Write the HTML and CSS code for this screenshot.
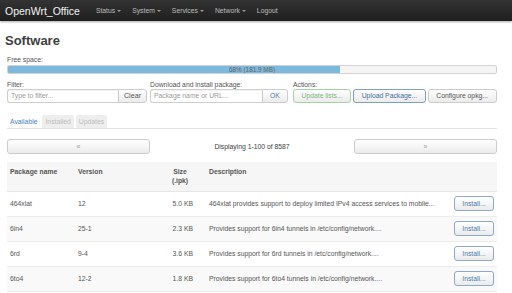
FILE: index.html
```html
<!DOCTYPE html>
<html>
<head>
<meta charset="utf-8">
<title>Software</title>
<link rel="stylesheet" href="styles.css">
</head>
<body>
<header class="topbar">
  <span class="brand">OpenWrt_Office</span>
  <nav class="menu">
    <span class="menu-item">Status<i class="caret"></i></span>
    <span class="menu-item">System<i class="caret"></i></span>
    <span class="menu-item">Services<i class="caret"></i></span>
    <span class="menu-item">Network<i class="caret"></i></span>
    <span class="menu-item">Logout</span>
  </nav>
</header>
<main class="main">
  <h2 class="title">Software</h2>
  <div class="label">Free space:</div>
  <div class="bar">
    <div class="bar-fill" style="width: 68%"></div>
    <div class="bar-text">68% (181.9 MB)</div>
  </div>
  <div class="controls">
    <div class="group group-filter">
      <div class="label">Filter:</div>
      <div class="input-row">
        <span class="input input-filter">Type to filter...</span>
        <span class="btn btn-attached btn-clear">Clear</span>
      </div>
    </div>
    <div class="group group-download">
      <div class="label">Download and install package:</div>
      <div class="input-row">
        <span class="input input-pkg">Package name or URL...</span>
        <span class="btn btn-attached btn-ok">OK</span>
      </div>
    </div>
    <div class="group group-actions">
      <div class="label">Actions:</div>
      <div class="input-row actions">
        <span class="btn btn-green">Update lists...</span>
        <span class="btn btn-blue">Upload Package...</span>
        <span class="btn">Configure opkg...</span>
      </div>
    </div>
  </div>
  <div class="tabs">
    <span class="tab active">Available</span>
    <span class="tab">Installed</span>
    <span class="tab">Updates</span>
  </div>
  <div class="pager">
    <span class="btn pager-btn">&laquo;</span>
    <span class="pager-text">Displaying 1-100 of 8587</span>
    <span class="btn pager-btn">&raquo;</span>
  </div>
  <table class="pkgs">
    <colgroup>
      <col class="c-name"><col class="c-ver"><col class="c-size"><col class="c-desc"><col class="c-act">
    </colgroup>
    <thead>
      <tr>
        <th>Package name</th>
        <th>Version</th>
        <th class="num">Size<br>(.ipk)</th>
        <th>Description</th>
        <th></th>
      </tr>
    </thead>
    <tbody>
      <tr>
        <td>464xlat</td><td>12</td><td class="num">5.0 KB</td>
        <td>464xlat provides support to deploy limited IPv4 access services to mobile...</td>
        <td class="act"><span class="btn btn-install">Install...</span></td>
      </tr>
      <tr>
        <td>6in4</td><td>25-1</td><td class="num">2.3 KB</td>
        <td>Provides support for 6in4 tunnels in /etc/config/network....</td>
        <td class="act"><span class="btn btn-install">Install...</span></td>
      </tr>
      <tr>
        <td>6rd</td><td>9-4</td><td class="num">3.6 KB</td>
        <td>Provides support for 6rd tunnels in /etc/config/network....</td>
        <td class="act"><span class="btn btn-install">Install...</span></td>
      </tr>
      <tr>
        <td>6to4</td><td>12-2</td><td class="num">1.8 KB</td>
        <td>Provides support for 6to4 tunnels in /etc/config/network....</td>
        <td class="act"><span class="btn btn-install">Install...</span></td>
      </tr>
    </tbody>
  </table>
</main>
</body>
</html>
```
FILE: styles.css
```css
html, body {
  margin: 0;
  padding: 0;
  overflow: hidden;
  background: #fff;
}
body {
  font-family: "Liberation Sans", Arial, sans-serif;
  font-size: 6.8px;
  line-height: 9px;
  color: #404040;
}
.topbar {
  height: 21px;
  display: flex;
  align-items: center;
  background: linear-gradient(#333333, #1f1f1f);
  box-shadow: 0 1px 2px rgba(0, 0, 0, 0.35);
  padding-left: 5px;
}
.brand {
  font-size: 10.5px;
  color: #f2f2f2;
  line-height: 12px;
}
.menu {
  display: flex;
  gap: 11px;
  margin-left: 16px;
}
.menu-item {
  color: #bdbdbd;
  display: flex;
  align-items: center;
  line-height: 9px;
}
.caret {
  display: inline-block;
  margin-left: 2px;
  width: 0;
  height: 0;
  border-top: 2.5px solid #999;
  border-left: 2px solid transparent;
  border-right: 2px solid transparent;
}
.main {
  padding: 0 15px 0 7px;
}
.title {
  margin: 12px 0 0 -2px;
  font-size: 13px;
  line-height: 15px;
  font-weight: bold;
  color: #404040;
}
.label {
  color: #555;
  line-height: 9px;
}
.main > .label {
  margin-top: 7px;
}
.bar {
  margin-top: 1px;
  height: 7px;
  border: 1px solid #d2d2d2;
  border-radius: 2px;
  background: #f5f5f5;
  display: grid;
  overflow: hidden;
}
.bar-fill, .bar-text {
  grid-area: 1 / 1;
}
.bar-fill {
  background: #7cb9de;
  height: 7px;
}
.bar-text {
  text-align: center;
  font-size: 6.4px;
  line-height: 7px;
  color: #666;
}
.controls {
  display: flex;
  margin-top: 6px;
}
.group-filter { width: 140px; }
.group-download { width: 138px; margin-left: 3px; }
.group-actions { margin-left: 5px; flex: 1; }
.input-row {
  display: flex;
}
.actions {
  gap: 2px;
}
.input {
  box-sizing: border-box;
  height: 14px;
  line-height: 12px;
  border: 1px solid #cfcfcf;
  border-right: none;
  border-radius: 3px 0 0 3px;
  padding: 0 3px;
  color: #9a9a9a;
  background: #fff;
  box-shadow: inset 0 1px 1px rgba(0, 0, 0, 0.06);
}
.input-filter { width: 111px; }
.input-pkg { width: 112px; }
.btn {
  box-sizing: border-box;
  height: 14px;
  line-height: 12px;
  border: 1px solid #cccccc;
  border-radius: 3px;
  background: linear-gradient(#ffffff, #ebebeb);
  color: #555;
  padding: 0 7.5px;
  text-align: center;
  white-space: nowrap;
}
.btn-attached {
  border-radius: 0 3px 3px 0;
  padding: 0;
  flex: 1;
}
.btn-clear { font-size: 7.2px; }
.btn-ok { color: #4c7fb8; }
.btn-green {
  border-color: #a6d3a3;
  color: #7bb57a;
}
.btn-blue {
  border-color: #7e9fc6;
  color: #3f6ea5;
}
.tabs {
  display: flex;
  gap: 2px;
  margin-top: 12px;
  height: 13px;
  border-bottom: 1px solid #e2e2e2;
}
.tab {
  padding: 0 3px;
  line-height: 13px;
  background: #eeeeee;
  color: #bcbcbc;
  border-radius: 2px 2px 0 0;
}
.tab.active {
  background: #fff;
  color: #4a84c1;
}
.pager {
  display: flex;
  align-items: center;
  margin-top: 10px;
}
.pager-btn {
  width: 143px;
  height: 15px;
  line-height: 13px;
  color: #999;
  padding: 0;
}
.pager-text {
  flex: 1;
  text-align: center;
}
.pkgs {
  margin-top: 8px;
  width: 100%;
  border-collapse: collapse;
  table-layout: fixed;
}
.c-name { width: 68px; }
.c-ver { width: 75px; }
.c-size { width: 56px; }
.c-desc { width: 244px; }
.c-act { width: 47px; }
.pkgs th {
  background: #f6f6f6;
  height: 29px;
  box-sizing: border-box;
  padding: 5px 3px 0;
  vertical-align: top;
  text-align: left;
  font-weight: bold;
  color: #555;
  border-bottom: 1px solid #e6e6e6;
}
.pkgs td {
  height: 25px;
  box-sizing: border-box;
  padding: 0 3px;
  vertical-align: middle;
  color: #555;
  border-bottom: 1px solid #ececec;
  white-space: nowrap;
  overflow: hidden;
}
.pkgs tbody tr:nth-child(even) td {
  background: #f9f9f9;
}
.pkgs .num {
  text-align: right;
  padding-right: 13px;
}
.pkgs th.num {
  text-align: center;
  padding-left: 14px;
  padding-right: 10px;
}
.pkgs td.act {
  padding: 0 3px 0 4px;
}
.btn-install {
  display: block;
  width: 40px;
  height: 15px;
  line-height: 13px;
  padding: 0;
  border-color: #8ea9cb;
  color: #4a7ab4;
}
```
